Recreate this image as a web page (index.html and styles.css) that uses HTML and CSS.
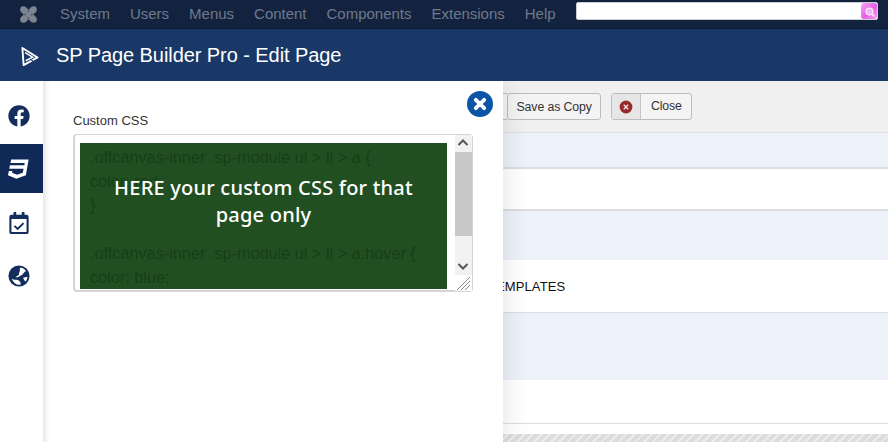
FILE: index.html
```html
<!DOCTYPE html>
<html lang="en">
<head>
<meta charset="utf-8">
<title>SP Page Builder Pro - Edit Page</title>
<link rel="stylesheet" href="styles.css">
</head>
<body>
<nav class="topbar">
  <svg class="joomla" viewBox="0 0 20 20" aria-hidden="true">
    <g fill="none" stroke="#7d8592" stroke-width="8">
      <path d="M4.500 4.500 L15.500 15.500"/><path d="M15.500 4.500 L4.500 15.500"/>
    </g>
    <g fill="#7d8592"><circle cx="4" cy="4" r="3.800"/><circle cx="16" cy="4" r="3.800"/><circle cx="4" cy="16" r="3.800"/><circle cx="16" cy="16" r="3.800"/></g>
    <g fill="#4c566a"><circle cx="10" cy="6" r="1.100"/><circle cx="10" cy="14" r="1.100"/><circle cx="6" cy="10" r="1.100"/><circle cx="14" cy="10" r="1.100"/></g>
  </svg>
  <ul class="menu">
    <li>System</li><li>Users</li><li>Menus</li><li>Content</li><li>Components</li><li>Extensions</li><li>Help</li>
  </ul>
  <div class="search">
    <span class="search-btn">
      <svg viewBox="0 0 16 16" aria-hidden="true"><circle cx="8.500" cy="8.500" r="3.400" fill="#f3b4f3" stroke="#fbeafb" stroke-width="1.300"/><path d="M11 11l2.400 2.400" stroke="#fbeafb" stroke-width="1.500"/></svg>
    </span>
  </div>
</nav>
<header class="titlebar">
  <svg class="sp-logo" viewBox="0 0 20 21" aria-hidden="true">
    <path d="M2.500 1.500 L18.500 11.500 L3.800 19.500 Z" fill="none" stroke="#fff" stroke-width="2" stroke-linejoin="round"/>
    <path d="M6 15 L13.300 11.200 L5.400 6.500" fill="none" stroke="#fff" stroke-width="1.600"/>
    <path d="M14 16 C13.200 14.600 12.400 14 11 13.300" fill="none" stroke="#1a3867" stroke-width="1.200"/>
  </svg>
  <h1>SP Page Builder Pro - Edit Page</h1>
</header>
<main class="workspace">
  <div class="page">
    <div class="toolbar">
      <button class="btn btn-stub"></button>
      <button class="btn">Save as Copy</button>
      <button class="btn btn-close">
        <span class="btn-icon"><svg viewBox="0 0 16 16" aria-hidden="true"><circle cx="8" cy="8" r="6.400" fill="#962a2a"/><path d="M5.800 5.800l4.400 4.400M10.200 5.800l-4.400 4.400" stroke="#f2dede" stroke-width="1.500"/></svg></span>
        <span class="btn-label">Close</span>
      </button>
    </div>
    <div class="row tint h-a"></div>
    <div class="row h-b"></div>
    <div class="row tint h-c no-line"></div>
    <div class="row h-d"><span class="row-text">TEMPLATES</span></div>
    <div class="row tint h-e no-line"></div>
    <div class="row h-f"></div>
    <div class="gap"></div>
    <div class="hatch"></div>
  </div>
  <aside class="tabs">
    <div class="tab tab-fb">
      <svg class="tab-icon" viewBox="0 0 512 512" aria-hidden="true"><path fill="#132e5c" d="M504 256C504 119 393 8 256 8S8 119 8 256c0 123.780 90.690 226.380 209.250 245V327.690h-63V256h63v-54.640c0-62.150 37-96.480 93.670-96.480 27.140 0 55.520 4.840 55.520 4.840v61h-31.280c-30.800 0-40.410 19.120-40.410 38.730V256h68.780l-11 71.690h-57.780V501C413.310 482.380 504 379.780 504 256z"/></svg>
    </div>
    <div class="tab tab-active">
      <svg class="tab-icon" viewBox="0 0 512 512" aria-hidden="true"><path fill="#fff" d="M480 32l-64 368-223.300 80L0 400l19.600-94.800h82l-8 40.600L210 390.200l134.100-44.400 18.800-97.100H29.500l16-82h333.700l10.500-52.700H56.300l16.300-82H480z"/></svg>
    </div>
    <div class="tab tab-cal">
      <svg class="tab-icon" viewBox="0 0 448 512" aria-hidden="true"><path fill="#132e5c" d="M400 64h-48V12c0-6.600-5.400-12-12-12h-40c-6.600 0-12 5.400-12 12v52H160V12c0-6.600-5.400-12-12-12h-40c-6.600 0-12 5.400-12 12v52H48C21.500 64 0 85.500 0 112v352c0 26.500 21.500 48 48 48h352c26.500 0 48-21.500 48-48V112c0-26.500-21.500-48-48-48zm0 400H48V160h352z"/><path fill="none" stroke="#132e5c" stroke-width="46" d="M118 322l74 72 138-136"/></svg>
    </div>
    <div class="tab tab-globe">
      <svg class="tab-icon" viewBox="0 0 24 24" aria-hidden="true"><circle cx="12" cy="12" r="11.500" fill="#132e5c"/><path fill="#fff" d="M13 3.200c2.600-.6 5.200.9 6.600 3.400-1.600 1-2.600 2.200-3.600 3.600-.8 1.200-2.300 1.200-3.400 2.200-1.500 1.200-2.800 1.400-4.400.6 1-.8 2.600-1.200 3.600-2.400.9-1-.4-1.600.6-2.800.8-1 .4-2.600.6-4.600z"/><path fill="#fff" d="M4 15c2.500 1.600 4.800.8 6.600 1.400 2.200.7 3.600 3 3.200 5-3.800 1-7.800-1.400-9.800-6.400z"/><path fill="#fff" d="M16.500 14c1.500-.8 3.500-1 4.800-1-.2 2-1 3.800-2.400 5-1.200-1.200-1.800-2.600-2.400-4z"/></svg>
    </div>
  </aside>
  <section class="panel">
    <button class="panel-close" aria-label="Close">
      <svg viewBox="0 0 26 26" aria-hidden="true"><path d="M8.800 8.800l8.400 8.400M17.200 8.800l-8.400 8.400" stroke="#fff" stroke-width="3.800" stroke-linecap="round"/></svg>
    </button>
    <label class="field-label">Custom CSS</label>
    <div class="editor">
      <div class="code-area">
        <pre class="code">.offcanvas-inner .sp-module ul &gt; li &gt; a {
color: red;
}

.offcanvas-inner .sp-module ul &gt; li &gt; a:hover {
color: blue;</pre>
        <p class="note">HERE your custom CSS for that page only</p>
      </div>
      <div class="scrollbar">
        <span class="sb-btn"><svg viewBox="0 0 16 16" aria-hidden="true"><path d="M3.500 10l4.500-4.500 4.500 4.500" fill="none" stroke="#555" stroke-width="2"/></svg></span>
        <span class="sb-thumb"></span>
        <span class="sb-track"></span>
        <span class="sb-btn"><svg viewBox="0 0 16 16" aria-hidden="true"><path d="M3.500 6l4.500 4.500 4.500-4.500" fill="none" stroke="#555" stroke-width="2"/></svg></span>
        <span class="sb-grip"><svg viewBox="0 0 16 16" aria-hidden="true"><path d="M15 2L2 15M15 6L6 15M15 10L10 15" stroke="#888" stroke-width="1"/></svg></span>
      </div>
    </div>
  </section>
</main>
</body>
</html>
```
FILE: styles.css
```css
* { box-sizing: border-box; }
html, body { margin: 0; height: 100%; overflow: hidden; }
body {
  width: 888px;
  height: 442px;
  display: flex;
  flex-direction: column;
  font-family: "Liberation Sans", Arial, sans-serif;
  background: #fff;
}
.topbar {
  height: 29px;
  flex: none;
  display: flex;
  align-items: flex-start;
  background: #13233f;
  border-bottom: 1px solid #0e1a30;
  padding-left: 20px;
}
.joomla { width: 17px; height: 17px; margin-top: 6px; flex: none; }
.menu {
  list-style: none;
  margin: 0 0 0 23px;
  padding: 0;
  display: flex;
  gap: 20px;
  color: #6f798b;
  font-size: 15px;
  letter-spacing: -.01px;
  line-height: 28px;
}
.search {
  margin: 2px 10px 0 auto;
  width: 302px;
  height: 18px;
  background: #fff;
  border: 1px solid #c9cdd6;
  border-radius: 2px;
  display: flex;
  justify-content: flex-end;
}
.search-btn {
  width: 16px;
  height: 16px;
  border-radius: 3px 2px 3px 3px;
  background: linear-gradient(135deg, #f6a6f6, #e65fe6 55%, #f2a0ee);
}
.search-btn svg { display: block; width: 16px; height: 16px; }
.titlebar {
  height: 52px;
  flex: none;
  display: flex;
  align-items: center;
  background: #1a3867;
  padding-left: 20px;
}
.sp-logo { width: 19px; height: 21px; flex: none; margin-top: 2px; }
.titlebar h1 {
  margin: 0 0 0 17px;
  color: #fff;
  font-size: 20px;
  font-weight: 400;
  letter-spacing: -.07px;
}
.workspace { flex: 1; position: relative; min-height: 0; overflow: hidden; }
.page { height: 100%; display: flex; flex-direction: column; }
.toolbar {
  height: 52px;
  flex: none;
  display: flex;
  align-items: flex-start;
  padding: 12px 0 0 480px;
  background: #f0f0f0;
  border-bottom: 1px solid #dcdcdc;
}
.btn {
  height: 27px;
  padding: 0 8.500px;
  border: 1px solid #bdbdbd;
  border-radius: 3px;
  background: #f4f4f4;
  color: #333;
  font: 12.300px "Liberation Sans", Arial, sans-serif;
  letter-spacing: -.1px;
}
.btn-stub { width: 27px; border-right: 0; border-radius: 0; padding: 0; }
.btn-close { margin-left: 10px; padding: 0; display: flex; align-items: stretch; }
.btn-icon {
  width: 29px;
  display: flex;
  align-items: center;
  justify-content: center;
  background: #e6e6e6;
  border-right: 1px solid #c4c4c4;
}
.btn-icon svg { width: 16px; height: 16px; }
.btn-label { width: 50px; line-height: 25px; text-align: center; }
.row { flex: none; background: #fff; border-bottom: 2px solid #ddd; display: flex; align-items: center; }
.tint { background: #edf2fa; }
.no-line { border-bottom: 0; }
.h-a { height: 36px; }
.h-b { height: 42px; }
.h-c { height: 49px; }
.h-d { height: 53px; border-bottom-width: 1px; }
.h-e { height: 67px; }
.h-f { height: 44px; border-bottom-width: 1px; }
.row-text { margin-left: 488px; font-size: 13px; color: #111; letter-spacing: .1px; }
.gap { height: 10px; flex: none; }
.hatch {
  flex: 1;
  background: repeating-linear-gradient(135deg, #dcdcdc 0 4px, #ececec 4px 6px);
}
.tabs {
  position: absolute;
  left: 0;
  top: 0;
  bottom: 0;
  width: 43px;
  background: #fff;
  padding-top: 9px;
  display: flex;
  flex-direction: column;
  z-index: 2;
}
.tab {
  flex: none;
  display: flex;
  align-items: center;
  justify-content: center;
  padding-right: 5px;
}
.tab-fb { height: 52px; }
.tab-active { height: 49px; margin-top: 2px; background: #0f2a56; }
.tab-cal { height: 60px; }
.tab-globe { height: 45px; }
.tab-icon { width: 22px; height: 22px; display: block; }
.panel {
  position: absolute;
  left: 43px;
  top: 0;
  bottom: 0;
  width: 460px;
  background: #fff;
  padding: 31px 30px 0;
  box-shadow: 0 0 26px rgba(0, 0, 0, .13), inset 7px 0 6px -5px rgba(0, 0, 0, .13);
  z-index: 1;
}
.panel-close {
  position: absolute;
  left: 424px;
  top: 10px;
  width: 26px;
  height: 26px;
  padding: 0;
  border: 0;
  border-radius: 50%;
  background: #0b54a8;
}
.panel-close svg { display: block; width: 26px; height: 26px; }
.field-label { display: block; font-size: 13px; line-height: 17px; color: #333; margin-bottom: 5px; }
.editor {
  width: 400px;
  height: 158px;
  display: flex;
  background: #fff;
  border-style: solid;
  border-width: 1px 1px 2px 2px;
  border-color: #d4d4d4;
  border-radius: 4px;
  padding: 0 0 0 5px;
}
.code-area {
  position: relative;
  width: 367px;
  height: 146px;
  margin-top: 8px;
  background: #224f22;
  overflow: hidden;
}
.code {
  margin: 0;
  padding: 2px 0 0 10px;
  font: 16.250px/24px "Liberation Sans", Arial, sans-serif;
  color: #163f16;
}
.note {
  position: absolute;
  left: 0;
  right: 0;
  top: 31px;
  margin: 0;
  text-align: center;
  color: #fff;
  font: 500 20px/27px "Noto Sans", sans-serif;
  letter-spacing: .22px;
  padding: 0 30px;
}
.scrollbar {
  margin-left: 8px;
  width: 17px;
  display: flex;
  flex-direction: column;
  flex: none;
}
.sb-btn { height: 17px; flex: none; background: #f1f1f1; }
.sb-btn svg, .sb-grip svg { display: block; width: 16px; height: 16px; }
.sb-thumb { height: 84px; flex: none; background: #c8c8c8; }
.sb-track { height: 22px; flex: none; background: #f1f1f1; }
.sb-grip { height: 16px; flex: none; background: #fff; }
```
